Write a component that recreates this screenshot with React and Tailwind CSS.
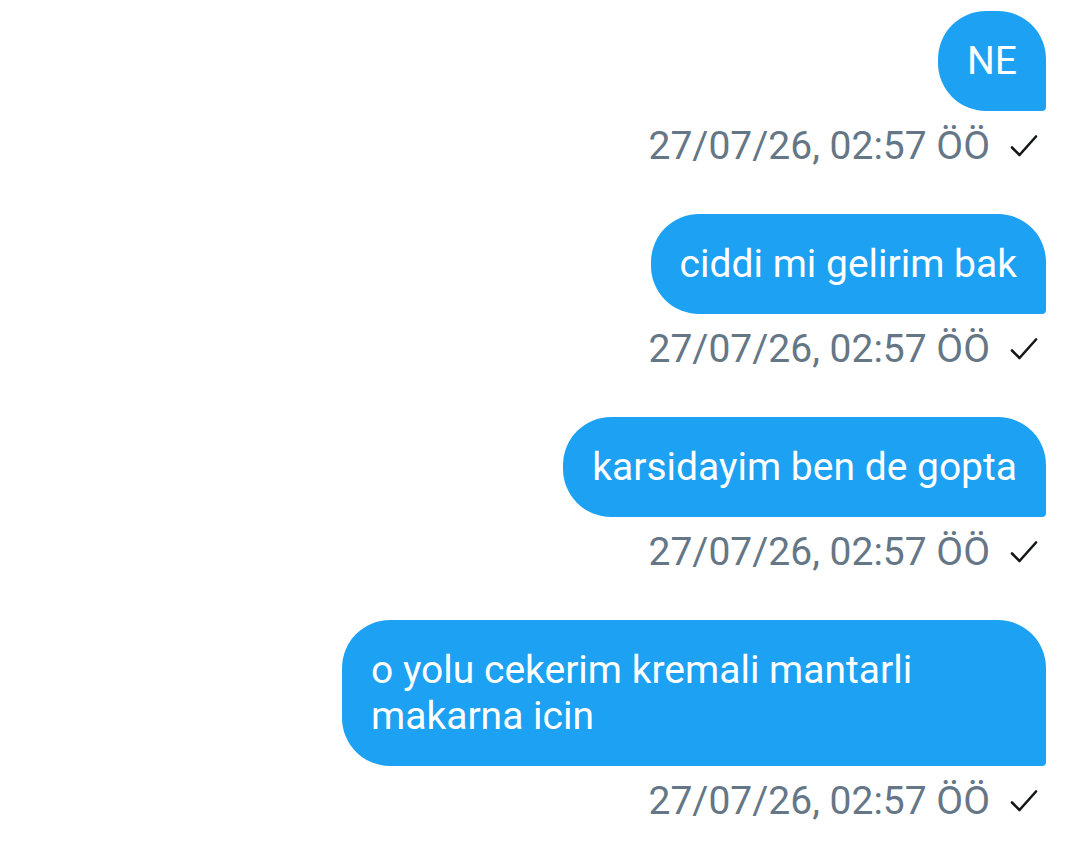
import React from 'react';

const messages = [
  { id: 1, text: 'NE', time: '27/07/26, 02:57 ÖÖ' },
  { id: 2, text: 'ciddi mi gelirim bak', time: '27/07/26, 02:57 ÖÖ' },
  { id: 3, text: 'karsidayim ben de gopta', time: '27/07/26, 02:57 ÖÖ' },
  { id: 4, text: 'o yolu cekerim kremali mantarli makarna icin', time: '27/07/26, 02:57 ÖÖ' },
];

const Check = () => (
  <svg width="28" height="24" viewBox="0 0 28 24" fill="none" className="shrink-0">
    <path d="M2 13.5 L9.5 21 L26 2.5" stroke="#14171a" strokeWidth="2.6" strokeLinecap="round" strokeLinejoin="round" />
  </svg>
);

const MessageRow = ({ msg }) => (
  <div className="flex flex-col items-end">
    <div className="max-w-[704px] bg-[#1da1f2] text-white text-[39px] leading-[46px] px-[29px] py-[27px] rounded-[48px] rounded-br-[4px]">
      {msg.text}
    </div>
    <div className="flex items-center gap-[20px] mt-[12px] mr-[8px] text-[#657786] text-[39px] leading-[46px]">
      <span>{msg.time}</span>
      <Check />
    </div>
  </div>
);

const App = () => {
  return (
    <div
      className="w-[1080px] h-[847px] bg-white overflow-hidden pt-[11px] pr-[34px] flex flex-col gap-[45px]"
      style={{ fontFamily: 'Roboto, "Noto Sans", sans-serif' }}
    >
      {messages.map((m) => (
        <MessageRow key={m.id} msg={m} />
      ))}
    </div>
  );
};

export default App;
